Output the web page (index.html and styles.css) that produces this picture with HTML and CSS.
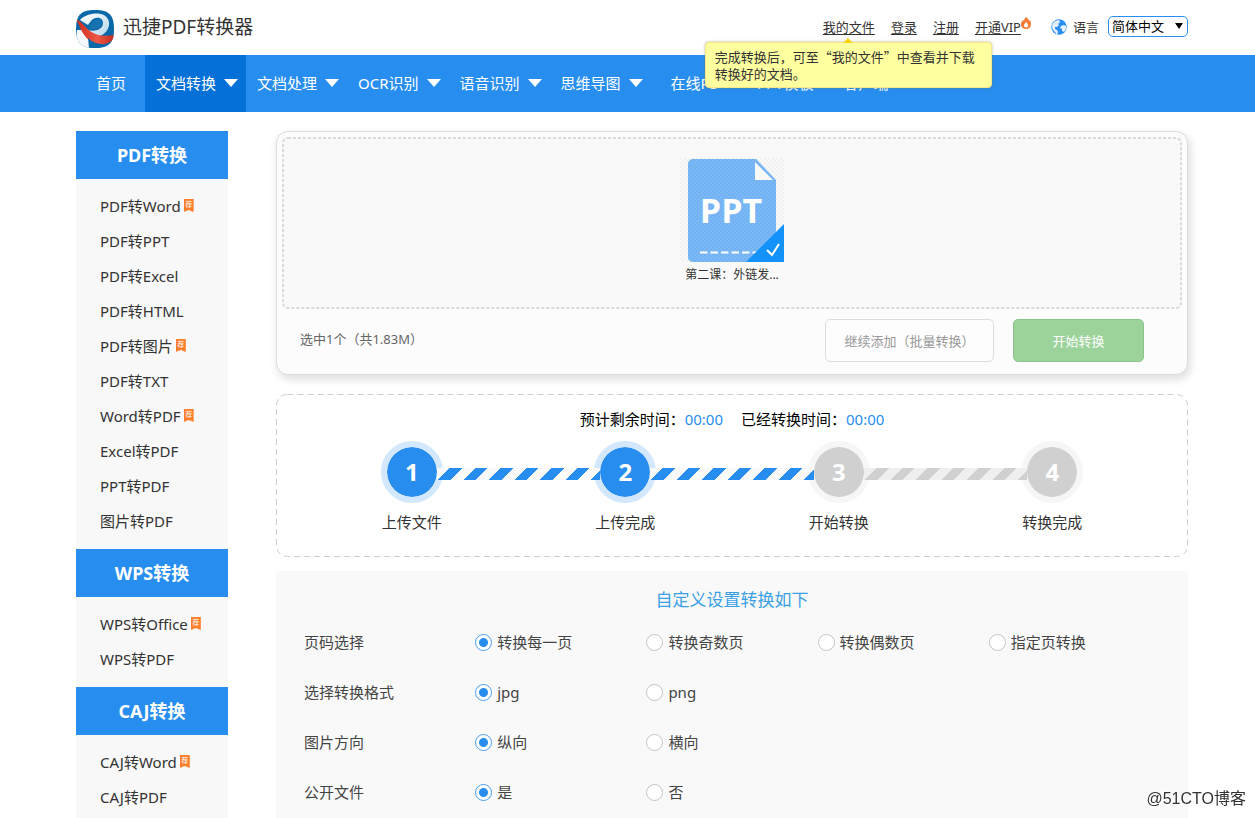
FILE: index.html
```html
<!DOCTYPE html>
<html lang="zh-CN">
<head>
<meta charset="utf-8">
<title>迅捷PDF转换器</title>
<link rel="stylesheet" href="styles.css">
</head>
<body>
<header class="top wrap">
  <a class="brand" href="#">
    <svg class="logo" viewBox="0 0 38 38" aria-hidden="true">
      <defs>
        <clipPath id="logo-clip"><path d="M19 0C33 0 38 5 38 19S33 38 19 38 0 33 0 19 5 0 19 0z"/></clipPath>
        <linearGradient id="loop" x1="0" y1="0" x2="1" y2="1"><stop offset="0" stop-color="#fff"/><stop offset="1" stop-color="#b5d6ee"/></linearGradient>
        <linearGradient id="ribbon" x1="0" y1="0" x2="1" y2="0"><stop offset="0" stop-color="#c82b1c"/><stop offset=".55" stop-color="#ee5745"/><stop offset="1" stop-color="#c62b20"/></linearGradient>
      </defs>
      <g clip-path="url(#logo-clip)">
        <rect width="38" height="38" fill="#0868a8"/>
        <path d="M1 20L12 20 14 38H6L0 30z" fill="#f5f9fc"/>
        <path d="M4 10C11 2 31 0 33 12c1 9-7 15-15 15l-6-7c6 2 15 0 15-7 0-6-8-7-12-2l-3 4z" fill="url(#loop)"/>
        <path d="M17 11c3-3 9-3 9 2s-6 7-11 6c-3-2-1-5 2-8z" fill="#1773b0"/>
        <path d="M0 9c5 2 9 8 14 12 8 6 16 5 24 4v4c-9 8-18 6-24 2C7 26 4 17 0 9z" fill="url(#ribbon)"/>
        <path d="M12 28c4 4 9 6 15 6l-3 4H13z" fill="#0868a8"/>
      </g>
    </svg>
    <span>迅捷PDF转换器</span>
  </a>
  <div class="account">
    <div class="files">
      <a href="#">我的文件</a>
      <div class="tip" role="tooltip">完成转换后，可至“我的文件”中查看并下载转换好的文档。</div>
    </div>
    <a href="#">登录</a>
    <a href="#">注册</a>
    <span class="vip"><a href="#">开通VIP</a><svg class="flame" viewBox="0 0 10 12" aria-hidden="true"><path d="M5 0c1 1 3 2 3 4l1-1c1 2 1 3 1 4 0 3-2 5-5 5S0 10 0 7c0-2 1-3 2-4l1 1c0-2 1-3 2-4z" fill="#f47b35"/><path d="M5 5c1 1 2 2 2 3.500S6.200 10.500 5 10.500 3 9.700 3 8.500 4.300 6.500 5 5z" fill="#fff"/></svg></span>
    <div class="language">
      <svg class="globe" viewBox="0 0 16 16" aria-hidden="true"><circle cx="8" cy="8" r="7.700" fill="#2a8ff0"/><path d="M1.500 5L4 2l4-1 1 2-2 2 1 1-2 2-2 0 0 2 2 1 1 2-1 3-2-3-2-2-1-3zM10 7l3-1 2 1 0 3-2 3-2-1 0-2-2-1z" fill="#fff" opacity=".88"/></svg>
      <label for="lang">语言</label>
      <div class="select"><select id="lang"><option>简体中文</option></select></div>
    </div>
  </div>
</header>
<nav class="nav">
  <div class="wrap menu">
    <a href="#">首页</a>
    <a class="drop active" href="#">文档转换</a>
    <a class="drop" href="#">文档处理</a>
    <a class="drop" href="#">OCR识别</a>
    <a class="drop" href="#">语音识别</a>
    <a class="drop" href="#">思维导图</a>
    <a href="#">在线PS</a>
    <a href="#">PPT模板</a>
    <a class="drop" href="#">客户端</a>
  </div>
</nav>
<div class="wrap content">
  <aside class="side">
    <h2>PDF转换</h2>
    <ul>
      <li><a href="#">PDF转Word</a><span class="tag">荐</span></li>
      <li><a href="#">PDF转PPT</a></li>
      <li><a href="#">PDF转Excel</a></li>
      <li><a href="#">PDF转HTML</a></li>
      <li><a href="#">PDF转图片</a><span class="tag">荐</span></li>
      <li><a href="#">PDF转TXT</a></li>
      <li><a href="#">Word转PDF</a><span class="tag">荐</span></li>
      <li><a href="#">Excel转PDF</a></li>
      <li><a href="#">PPT转PDF</a></li>
      <li><a href="#">图片转PDF</a></li>
    </ul>
    <h2>WPS转换</h2>
    <ul>
      <li><a href="#">WPS转Office</a><span class="tag">荐</span></li>
      <li><a href="#">WPS转PDF</a></li>
    </ul>
    <h2>CAJ转换</h2>
    <ul>
      <li><a href="#">CAJ转Word</a><span class="tag">荐</span></li>
      <li><a href="#">CAJ转PDF</a></li>
    </ul>
  </aside>
  <main class="main">
    <section class="upload">
      <div class="drop-zone">
        <svg class="outline" aria-hidden="true"><rect x="1" y="1" rx="5"/></svg>
        <figure class="file">
          <svg class="thumb" viewBox="0 0 104 104" role="img" aria-label="PPT文件">
            <defs><pattern id="check" width="4" height="4" patternUnits="userSpaceOnUse"><path d="M0 0h2v2H0zM2 2h2v2H2z" fill="#f1f1f1"/></pattern>
            <pattern id="weave" width="4" height="4" patternUnits="userSpaceOnUse"><path d="M0 0h2v2H0zM2 2h2v2H2z" fill="#72b2f3"/></pattern></defs>
            <rect width="104" height="104" fill="url(#check)"/>
            <path d="M13 1h63l20 21v82H13a5 5 0 0 1-5-5V6a5 5 0 0 1 5-5z" fill="#7ab8f6"/>
            <path d="M13 1h63l20 21v82H13a5 5 0 0 1-5-5V6a5 5 0 0 1 5-5z" fill="url(#weave)"/>
            <path d="M75 4v18h18z" fill="#f9f9f9"/>
            <path d="M20 94.500h57" stroke="#fff" stroke-width="2" stroke-dasharray="7.500 3"/>
            <path d="M104 66v38H66z" fill="#1492fb"/>
            <path d="M87 92l5 5 7-11" fill="none" stroke="#fff" stroke-width="2"/>
            <text class="thumb-text" x="51" y="65" text-anchor="middle">PPT</text>
          </svg>
          <figcaption>第二课：外链发...</figcaption>
        </figure>
      </div>
      <div class="actions">
        <p>选中1个（共1.83M）</p>
        <button class="more" type="button">继续添加（批量转换）</button>
        <button class="start" type="button">开始转换</button>
      </div>
    </section>
    <section class="progress">
      <svg class="outline" aria-hidden="true"><rect x=".5" y=".5" rx="11"/></svg>
      <div class="times"><span>预计剩余时间：<b>00:00</b></span><span>已经转换时间：<b>00:00</b></span></div>
      <ol class="steps">
        <li class="done"><span class="dot">1</span><i class="bar"></i><span>上传文件</span></li>
        <li class="done"><span class="dot">2</span><i class="bar"></i><span>上传完成</span></li>
        <li><span class="dot">3</span><i class="bar"></i><span>开始转换</span></li>
        <li><span class="dot">4</span><span>转换完成</span></li>
      </ol>
    </section>
    <form class="settings">
      <h3>自定义设置转换如下</h3>
      <div class="row" role="radiogroup" aria-labelledby="g1"><span id="g1">页码选择</span>
        <label><input type="radio" name="page" checked>转换每一页</label>
        <label><input type="radio" name="page">转换奇数页</label>
        <label><input type="radio" name="page">转换偶数页</label>
        <label><input type="radio" name="page">指定页转换</label></div>
      <div class="row" role="radiogroup" aria-labelledby="g2"><span id="g2">选择转换格式</span>
        <label><input type="radio" name="format" checked>jpg</label>
        <label><input type="radio" name="format">png</label></div>
      <div class="row" role="radiogroup" aria-labelledby="g3"><span id="g3">图片方向</span>
        <label><input type="radio" name="direction" checked>纵向</label>
        <label><input type="radio" name="direction">横向</label></div>
      <div class="row" role="radiogroup" aria-labelledby="g4"><span id="g4">公开文件</span>
        <label><input type="radio" name="public" checked>是</label>
        <label><input type="radio" name="public">否</label></div>
    </form>
  </main>
</div>
<div class="watermark">@51CTO博客</div>
</body>
</html>
```
FILE: styles.css
```css
* { box-sizing: border-box; }
body {
  margin: 0;
  height: 100vh;
  overflow: hidden;
  display: flex;
  flex-direction: column;
  background: #fff;
  color: #333;
  font: 15px/20px "Noto Sans", "Noto Sans CJK SC", sans-serif;
}
a { color: inherit; text-decoration: none; }
h2, h3, p, ul, ol, figure { margin: 0; padding: 0; }
ul, ol { list-style: none; }
select, button { font: inherit; }
.wrap { width: 100%; padding: 0 67px 0 76px; }

.top { flex: none; height: 55px; display: flex; justify-content: space-between; align-items: center; }
.brand { display: flex; align-items: center; gap: 9px; padding-top: 2px; font-size: 19px; line-height: 28px; }
.brand span { padding-bottom: 3px; }
.logo { width: 38px; height: 38px; }
.account { display: flex; align-items: center; gap: 16px; padding-bottom: 2px; font-size: 13px; }
.account a { text-decoration: underline; text-underline-offset: 2px; }
.files { position: relative; }
.tip {
  position: absolute;
  z-index: 5;
  top: 25px;
  left: 50%;
  width: 287px;
  margin-left: -144px;
  padding: 5px 9px;
  border: 1px solid #f7e68b;
  border-radius: 4px;
  background: #feff9f;
  box-shadow: 0 0 3px rgba(120, 120, 60, .5);
  font-family: "Noto Sans CJK SC", sans-serif;
  line-height: 17px;
}
.tip::before {
  content: "";
  position: absolute;
  left: 50%;
  top: -5px;
  margin-left: -5px;
  border: 5px solid transparent;
  border-top: 0;
  border-bottom-color: #fbd305;
}
.vip { display: flex; }
.flame { width: 10px; height: 12px; }
.language { display: flex; align-items: center; padding-left: 4px; }
.globe { width: 16px; height: 16px; margin-right: 6px; }
.select { position: relative; margin-left: 9px; }
.select::after {
  content: "";
  position: absolute;
  right: 5px;
  top: 7px;
  border: 4px solid transparent;
  border-top: 6px solid #000;
  border-bottom: 0;
  pointer-events: none;
}
.select select {
  display: block;
  appearance: none;
  width: 80px;
  height: 21px;
  padding: 0 3px;
  border: 1px solid #278ef0;
  border-radius: 5px;
  background: #fff;
  color: #000;
  line-height: 19px;
}

.nav { flex: none; background: #278ef0; color: #fff; }
.menu { display: flex; height: 57px; }
.menu a { display: flex; align-items: center; padding: 0 19px 2px 20px; white-space: nowrap; }
.menu .drop { padding: 0 8px 2px 11px; }
.menu .drop::after {
  content: "";
  margin-left: 8px;
  border: 7px solid transparent;
  border-top: 8px solid #fff;
  border-bottom: 0;
}
.menu .active { background: #0470d8; }

.content { flex: 1; min-height: 0; display: flex; gap: 48px; padding-top: 19px; }
.side { flex: 0 0 152px; background: #f8f8f8; }
.side h2 { background: #278ef0; color: #fff; font-size: 18px; line-height: 48px; text-align: center; }
.side ul { padding: 9px 0 11px; }
.side li { display: flex; align-items: center; height: 35px; padding-left: 24px; }
.tag {
  width: 10px;
  height: 13px;
  margin-left: 3px;
  background: #fb7f2d;
  clip-path: polygon(0 0, 100% 0, 100% 100%, 50% 85%, 0 100%);
  color: #fff;
  font-size: 7px;
  line-height: 11px;
  text-align: center;
}

.main { flex: 1; min-width: 0; display: flex; flex-direction: column; }
.outline { position: absolute; inset: 0; width: 100%; height: 100%; pointer-events: none; }
.outline rect { fill: none; }
.upload {
  padding: 5px;
  border: 1px solid #ddd;
  border-radius: 12px;
  background: #fcfcfc;
  box-shadow: 2px 4px 10px rgba(0, 0, 0, .14);
}
.drop-zone { position: relative; padding: 21px 0 24px; background: #f9f9f9; }
.drop-zone .outline rect {
  width: calc(100% - 2px);
  height: calc(100% - 2px);
  stroke: #dadada;
  stroke-width: 2px;
  stroke-dasharray: 3 2;
}
.file { width: 104px; margin: 0 auto; font-size: 12px; text-align: center; white-space: nowrap; }
.thumb { display: block; width: 104px; height: 104px; margin-bottom: 3px; }
.thumb-text { fill: #fff; font: bold 34px "Open Sans", sans-serif; }
.actions { display: flex; align-items: center; padding: 10px 38px 7px 18px; font-size: 13px; color: #666; }
.actions p { margin-right: auto; padding-bottom: 4px; }
.actions button { height: 43px; border-radius: 5px; padding: 0; }
.more { width: 169px; border: 1px solid #ddd; background: #fdfdfd; color: #999; }
.start { width: 131px; margin-left: 19px; border: 1px solid #8cc48c; background: #9cd39b; color: #fff; }

.progress { position: relative; margin-top: 19px; padding: 15px 29px 25px; }
.progress .outline rect {
  width: calc(100% - 1px);
  height: calc(100% - 1px);
  stroke: #ccc;
  stroke-dasharray: 6 4;
}
.times { display: flex; justify-content: center; gap: 18px; color: #000; }
.times b { font-weight: normal; color: #278ef0; }
.steps { display: flex; padding-top: 12px; }
.steps li { flex: 1; position: relative; display: flex; flex-direction: column; align-items: center; gap: 9px; }
.dot {
  position: relative;
  width: 62px;
  height: 62px;
  border: 6px solid rgba(232, 232, 232, .4);
  border-radius: 50%;
  background: #d0d0d0;
  background-clip: padding-box;
  color: #fff;
  font-size: 24px;
  font-weight: bold;
  line-height: 49px;
  text-align: center;
}
.done .dot { border-color: #d3e8fc; background-color: #278ef0; }
.bar {
  position: absolute;
  z-index: 1;
  left: 50%;
  top: 27px;
  width: calc(100% - 50px);
  height: 12px;
  margin-left: 25px;
  background: repeating-linear-gradient(135deg, #efefef 0 9px, #d0d0d0 9px 18px);
}
.done .bar { background: repeating-linear-gradient(135deg, #f9f9f9 0 9px, #278ef0 9px 18px); }

.settings { flex: 1; margin-top: 14px; padding: 17px 28px; background: #f9f9f9; color: #444; }
.settings h3 { margin-bottom: 10px; color: #3a9fe4; font-size: 17px; font-weight: normal; line-height: 24px; text-align: center; }
.row { display: grid; grid-template-columns: repeat(5, 1fr); align-items: center; height: 40px; margin-bottom: 10px; }
.row label { display: flex; align-items: center; gap: 5px; }
.row input {
  appearance: none;
  flex: none;
  width: 17px;
  height: 17px;
  margin: 0;
  border: 1px solid #c4c4c4;
  border-radius: 50%;
  background: #fff;
}
.row input:checked { border-color: #4b9ff0; background: radial-gradient(circle, #278ef0 0 4px, #fff 5px); }

.watermark {
  position: fixed;
  right: 9px;
  bottom: 9px;
  color: #333;
  font: 16px/20px "Liberation Sans", "Noto Sans CJK SC", sans-serif;
  text-shadow: 1px 1px 1px #fff, -1px -1px 1px #fff;
}
```
